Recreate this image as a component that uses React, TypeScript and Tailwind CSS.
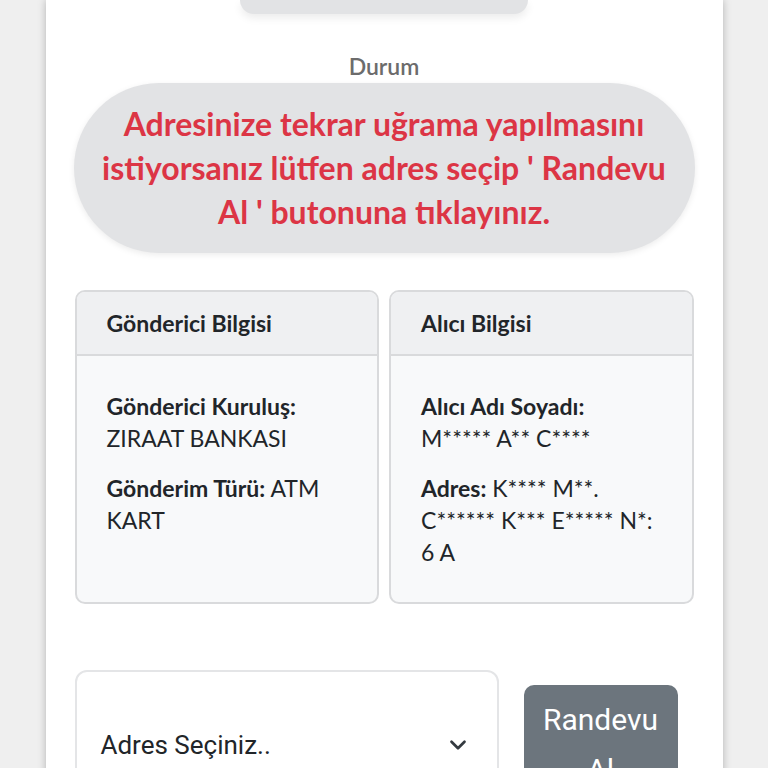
import { ChevronDown } from "lucide-react";

const font = { fontFamily: "Lato, 'Noto Sans', sans-serif" };

function InfoCard({ title, children }: { title: string; children: React.ReactNode }) {
  return (
    <div className="flex flex-col rounded-[10px] border-2 border-[#d9dadc] bg-[#f8f9fa] overflow-hidden">
      <div className="h-[64px] shrink-0 flex items-center px-[30px] bg-[#eff0f2] border-b-2 border-[#d9dadc]">
        <h3 className="text-[23px] font-bold text-[#212529]">{title}</h3>
      </div>
      <div className="flex-1 pl-[30px] pr-[36px] pt-[34px] pb-[24px] text-[23px] leading-[32px] text-[#212529] flex flex-col gap-[18px]">
        {children}
      </div>
    </div>
  );
}

export default function App() {
  return (
    <div className="h-[768px] overflow-hidden bg-[#efefef] flex justify-center items-start" style={font}>
      <div className="w-[677px] min-h-[768px] bg-white shadow-[0_0_8px_rgba(0,0,0,0.25)] flex flex-col">
        <div className="mx-auto w-[288px] h-[14px] shrink-0 rounded-b-[30px] bg-[#e2e3e5] shadow-[0_4px_8px_rgba(0,0,0,0.08)]" />

        <p className="mt-[40px] text-center text-[23px] font-semibold text-[#6c6c6c] leading-[24px]">Durum</p>

        <div className="mx-[28px] mt-[5px] shrink-0 rounded-[86px] bg-[#e2e3e5] py-[19px] px-[18px] shadow-[0_2px_6px_rgba(0,0,0,0.08)]">
          <p className="text-center text-[32px] leading-[44px] font-bold text-[#dc3545]">
            Adresinize tekrar uğrama yapılmasını istiyorsanız lütfen adres seçip ' Randevu Al ' butonuna tıklayınız.
          </p>
        </div>

        <div className="mx-[29px] mt-[37px] grid grid-cols-2 gap-[10px] h-[314px] shrink-0">
          <InfoCard title="Gönderici Bilgisi">
            <p>
              <span className="font-bold">Gönderici Kuruluş:</span> ZIRAAT BANKASI
            </p>
            <p>
              <span className="font-bold">Gönderim Türü:</span> ATM KART
            </p>
          </InfoCard>
          <InfoCard title="Alıcı Bilgisi">
            <p>
              <span className="font-bold">Alıcı Adı Soyadı:</span> M***** A** C****
            </p>
            <p>
              <span className="font-bold">Adres:</span> K**** M**. C****** K*** E***** N*: 6 A
            </p>
          </InfoCard>
        </div>

        <div className="mx-[29px] mt-[66px] flex items-start gap-[25px] shrink-0">
          <div className="w-[424px] h-[150px] rounded-[12px] border-2 border-[#e4e5e7] bg-white flex items-center pl-[24px] pr-[26px]">
            <span className="flex-1 text-[26px] text-[#212529]" style={{ fontFamily: "Roboto, sans-serif" }}>Adres Seçiniz..</span>
            <ChevronDown size={26} strokeWidth={2.5} className="text-[#343a40]" />
          </div>
          <button className="mt-[15px] w-[154px] h-[130px] rounded-[10px] bg-[#6c757d] text-white text-[30px] leading-[50px] px-3 pt-[10px] flex items-start justify-center text-center" style={{ fontFamily: "Roboto, sans-serif" }}>
            Randevu Al
          </button>
        </div>
      </div>
    </div>
  );
}
